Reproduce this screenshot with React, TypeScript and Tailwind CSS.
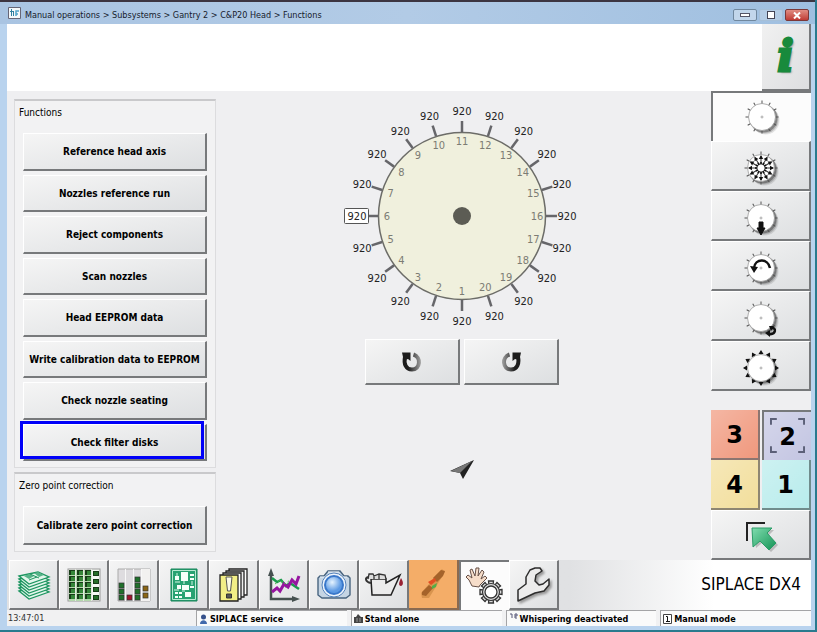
import type { ReactNode } from "react"
import clsx from "clsx"

const functionLabels = [
    "Reference head axis",
    "Nozzles reference run",
    "Reject components",
    "Scan nozzles",
    "Head EEPROM data",
    "Write calibration data to EEPROM",
    "Check nozzle seating",
    "Check filter disks",
]

const bevel =
    "border-t border-l border-r-2 border-b-2 border-t-white border-l-white border-r-[#77797b] border-b-[#77797b] bg-linear-to-br from-[#f5f5f5] via-[#e9eaeb] to-[#dddfe1]"
const sunken = "border-t-2 border-l-2 border-[#77797b] bg-[#fcfcfc]"

function PushButton({ label, highlighted = false }: { label: string; highlighted?: boolean }) {
    return (
        <button
            type="button"
            className={clsx(
                "relative flex-1 min-h-8 pt-0.5 whitespace-nowrap text-center text-[10px] leading-4 font-bold",
                bevel,
            )}
        >
            {label}
            {highlighted && <span className="absolute -top-1 -left-1 right-px bottom-0 border-3 border-[#0000f8]" />}
        </button>
    )
}

function Group({ title, children, className }: { title: string; children: ReactNode; className?: string }) {
    return (
        <section
            className={clsx(
                "flex flex-col border border-t-2 border-[#dcdcde] border-t-[#c9c9cb] bg-[#f2f2f3] pl-2 pr-2 pb-1.5",
                className,
            )}
        >
            <h2 className="-ml-1 h-8 pt-1 text-[10px] leading-4">{title}</h2>
            {children}
        </section>
    )
}

function polar(deg: number, r: number) {
    const a = (deg * Math.PI) / 180
    return { x: Math.cos(a) * r, y: Math.sin(a) * r }
}

// Segment 16 is on the right, numbers grow clockwise up to 20 and 1 is at the bottom
function HeadDial() {
    const segments = Array.from({ length: 20 }, (_, i) => ({ id: i + 1, deg: 90 + i * 18 }))
    return (
        <svg width="240" height="230" viewBox="-120 -115 240 230" className="text-[11px]" role="img" aria-label="Head segments">
            <circle r="83.5" fill="#f0f0dd" stroke="#6c6c68" strokeWidth="1.5" />
            {segments.map(({ id, deg }) => {
                const a = polar(deg, 84)
                const b = polar(deg, 95)
                const outer = polar(deg, 105)
                const inner = polar(deg, 75)
                return (
                    <g key={id} textAnchor="middle">
                        <line x1={a.x} y1={a.y} x2={b.x} y2={b.y} stroke="#66666a" strokeWidth="2.5" />
                        {id === 6 && (
                            <rect x="-117.5" y="-7.5" width="24" height="15" rx="1" fill="#fff" stroke="#555" />
                        )}
                        <text x={outer.x} y={outer.y + 4} fill="#222">920</text>
                        <text x={inner.x} y={inner.y + 4} fill="#7c7c74">{id}</text>
                    </g>
                )
            })}
            <circle r="9" fill="#5c5c54" />
        </svg>
    )
}

function RotateIcon({ mirrored = false }: { mirrored?: boolean }) {
    return (
        <svg width="22" height="22" viewBox="0 0 22 22" className={mirrored ? "-scale-x-100" : ""}>
            <defs>
                <linearGradient id="rotate-fill" gradientUnits="userSpaceOnUse" x1="4" y1="0" x2="20" y2="0">
                    <stop offset="0.2" stopColor="#1c1c1c" />
                    <stop offset="1" stopColor="#a2a2a2" />
                </linearGradient>
            </defs>
            <path d="M4 6C2.500 13 5 18.500 11 18.500C19.500 18.500 20.500 6 12.500 3.500" fill="none" stroke="url(#rotate-fill)" strokeWidth="4" />
            <path d="M1 1.500H9.500V10L7 8L3 9L2 6Z" fill="#1c1c1c" />
        </svg>
    )
}

type HeadVariant = "plain" | "stars" | "down" | "turn" | "corner" | "arrows"

function HeadIcon({ variant }: { variant: HeadVariant }) {
    const spokes = Array.from({ length: 12 }, (_, i) => i * 30)
    return (
        <svg width="44" height="44" viewBox="-22 -22 44 44" className="overflow-visible">
            <circle cx="3.500" cy="3.500" r="14" fill="#000" opacity="0.1" />
            <circle cx="2.500" cy="2.500" r="14" fill="#000" opacity="0.16" />
            <circle cx="1.500" cy="1.500" r="14" fill="#000" opacity="0.3" />
            {spokes.map((d) => (
                <line key={d} x1="13" x2="16.500" stroke="#555" transform={`rotate(${d})`} />
            ))}
            <circle r="13.500" fill="#fff" stroke="#999" strokeWidth="0.8" />
            {variant !== "stars" && <path d="M-1.500 0H1.500M0-1.500V1.500" stroke="#999" strokeWidth="0.8" />}
            {variant === "stars" &&
                spokes.map((d) => (
                    <g key={d} transform={`rotate(${d})`}>
                        <path d="M6 0H12" stroke="#333" strokeWidth="1" />
                        <path d="M13 0L9-2.200V2.200Z" fill="#111" />
                        <path d="M3.500-0.900H6V0.900H3.500Z" fill="#111" />
                    </g>
                ))}
            {variant === "down" && <path d="M-2 4H2V10H4L0 17L-4 10H-2Z" fill="#111" stroke="#111" />}
            {variant === "turn" && (
                <g>
                    <path d="M-7 0C-6-10 7-10 9 0" fill="none" stroke="#111" strokeWidth="2.5" />
                    <path d="M-11-2L-3-1L-7 5Z" fill="#111" />
                </g>
            )}
            {variant === "corner" && (
                <g>
                    <path d="M10 10C16 9 15 17 8 16" fill="none" stroke="#111" strokeWidth="2.5" />
                    <path d="M9 12L4 15L9 19ZM8 8H13L10 13Z" fill="#111" />
                </g>
            )}
            {variant === "arrows" &&
                spokes.map((d) => (
                    <path key={d} d="M18 0L14-2.500V2.500Z" fill="#111" transform={`rotate(${d})`} />
                ))}
        </svg>
    )
}

const headTools: { name: string; variant: HeadVariant }[] = [
    { name: "Head functions", variant: "plain" },
    { name: "Star", variant: "stars" },
    { name: "Z axis", variant: "down" },
    { name: "Turn star", variant: "turn" },
    { name: "DP axis", variant: "corner" },
    { name: "Segments", variant: "arrows" },
]

function LayersIcon() {
    return (
        <svg width="34" height="34" viewBox="0 0 34 34">
            {[25, 22, 19, 16, 13, 10].map((y) => (
                <path
                    key={y}
                    d={`M2 ${y - 2}L21 ${y - 6}L32 ${y - 1}L12 ${y + 6}Z`}
                    fill="#e2f6eb"
                    stroke="#1d9560"
                    strokeWidth="1.3"
                />
            ))}
            <path d="M7 8L12 6L17 8L12 11ZM17 5L21 4L27 7L22 9Z" fill="#56b388" />
            <path d="M12 12L20 9M13 6L22 10" stroke="#1d9560" />
        </svg>
    )
}

function FeederIcon() {
    return (
        <svg width="34" height="34" viewBox="0 0 34 34">
            <rect x="1" y="1" width="32" height="32" fill="#f5f8f3" stroke="#999" />
            <path d="M2 2H24V33H2Z" fill="#b4d8ad" />
            <path d="M8.500 1V33M16.500 1V33M24.500 1V33" stroke="#e3e8e0" />
            {[2, 8, 14, 20, 26].map((y) =>
                [2, 10, 18].map((x) => (
                    <g key={`${x}-${y}`}>
                        <rect x={x} y={y} width="6" height="5" fill="#173c18" />
                        <rect x={x + 2} y={y + 1} width="4" height="4" fill="#348638" />
                    </g>
                )),
            )}
            {[3, 11, 19, 27].map((y) => (
                <g key={y}>
                    <rect x="26" y={y} width="6" height="5" fill="#173c18" />
                    <rect x="27" y={y + 1} width="4" height="3" fill="#266e28" />
                </g>
            ))}
        </svg>
    )
}

function LevelsIcon() {
    const blocks: [number, number, string][] = [
        [2, 15, "#20702b"], [2, 21, "#20702b"], [2, 27, "#20702b"],
        [10, 27, "#a2142d"],
        [18, 9, "#20702b"], [18, 15, "#20702b"], [18, 21, "#20702b"], [18, 27, "#20702b"],
        [26, 18, "#8b6514"], [26, 25, "#8b6514"],
    ]
    return (
        <svg width="34" height="34" viewBox="0 0 34 34">
            <path d="M1 1H33V33H1Z" fill="#dedcdf" stroke="#aaa" />
            <path d="M25 1H33V33H25Z" fill="#f2f1f0" />
            <path d="M8.500 1V33M16.500 1V33M24.500 1V33" stroke="#f8f8f8" />
            {blocks.map(([x, y, fill]) => (
                <rect key={`${x}-${y}`} x={x} y={y} width="5" height="5" fill={fill} stroke="#333" strokeWidth="0.7" />
            ))}
        </svg>
    )
}

function BoardIcon() {
    return (
        <svg width="28" height="34" viewBox="0 0 28 34">
            <path d="M1 1H27V33H1Z" fill="#28a272" stroke="#168358" />
            <path d="M2.500 2.500H25.500V31.500H2.500Z" fill="none" stroke="#b8e9d2" />
            <path
                d="M11 4H18V13H11ZM5 8H9V12H5ZM20 6H24V8H20ZM20 10H24V12H20ZM7 17H11V21H7ZM12 17H19V22H12ZM20 18H24V20H20ZM15 24H21V29H15ZM5 24H8V26H5ZM9 24H12V26H9ZM5 28H8V30H5ZM9 28H12V30H9Z"
                fill="#f6fffa"
            />
            <path d="M7 5V8M5 14H10M14 13V16M22 13V17M12 23H15M4 22H9" stroke="#d2f5e4" />
        </svg>
    )
}

function MessagesIcon() {
    return (
        <svg width="30" height="34" viewBox="0 0 30 34">
            <g stroke="#222" strokeWidth="1.3">
                <path d="M10 1H28V27H10Z" fill="#fff" />
                <path d="M7 3H25V29H7Z" fill="#eee" />
                <path d="M4 5H22V31H4Z" fill="#fff" />
                <path d="M1 7H19V33H1Z" fill="#f2ee86" />
            </g>
            <path d="M7 9H13L11.500 23H8.500Z" fill="#fbfae4" stroke="#555" />
            <path d="M7.500 26H12.500V30H7.500Z" fill="#555" stroke="#333" />
        </svg>
    )
}

function TrendIcon() {
    return (
        <svg width="34" height="36" viewBox="0 0 34 36">
            <path d="M4 6V32H27" fill="none" stroke="#45504f" strokeWidth="2.500" />
            <path d="M4 1L7 9H1ZM33 32L25 29V35Z" fill="#45504f" />
            <path d="M5 11L10 15L14 13L19 19L23 16L32 22" fill="none" stroke="#1a9b4c" strokeWidth="2.500" />
            <path d="M5 25L10 21L13 24L17 17L21 20L25 13L29 17L32 9" fill="none" stroke="#9615a0" strokeWidth="3" />
            <path d="M8 17L13 13L18 17L23 13" fill="none" stroke="#54bd50" strokeDasharray="2 2" />
        </svg>
    )
}

function CameraIcon() {
    return (
        <svg width="36" height="34" viewBox="0 0 36 34">
            <defs>
                <radialGradient id="lens" cx="0.4" cy="0.35">
                    <stop stopColor="#e6f4ff" />
                    <stop offset="1" stopColor="#5c9ae4" />
                </radialGradient>
            </defs>
            <path d="M2 10L4 8H8L12 3H24L28 8H32L34 10V27L30 30H6L2 27Z" fill="#c5d5e4" stroke="#48647f" strokeWidth="1.4" />
            <path d="M4 9H31M12 4H23" stroke="#eef5fc" />
            <circle cx="18" cy="17" r="12" fill="#eef5fc" stroke="#5783ba" />
            <circle cx="18" cy="17" r="9" fill="url(#lens)" stroke="#3a78ca" strokeWidth="2" />
        </svg>
    )
}

function OilCanIcon() {
    return (
        <svg width="40" height="28" viewBox="0 0 40 28">
            <path d="M7 8H22V12L36 4L27 24H8Z" fill="#ececec" stroke="#222" strokeWidth="1.5" />
            <path d="M4 8L5 3H9L10 5L15 3L21 4L22 8M10 4V8M15 3V8" fill="#ddd" stroke="#333" strokeWidth="1.3" />
            <path d="M4 6C1 7 1 11 7 12" fill="none" stroke="#333" strokeWidth="2" />
            <path d="M37 7C35 11 34 15 37 15C40 14 39 10 37 7Z" fill="#9a2233" />
        </svg>
    )
}

function FeederToolIcon() {
    return (
        <svg width="32" height="34" viewBox="0 0 32 34">
            <path d="M5 31L12 31L28 5L25 2L17 10L12 17L4 26Z" fill="#a5671f" opacity="0.35" />
            <path d="M16 11L24 3L28 4L26 9L20 15ZM5 25L12 18L16 21L9 29L5 28Z" fill="#a5632a" />
            <path d="M11 15L18 11L19 14L14 18Z" fill="#e44c22" />
            <path d="M15 19L20 16L19 20L15 22Z" fill="#53ae47" />
        </svg>
    )
}

function HandGearIcon() {
    return (
        <svg width="40" height="38" viewBox="0 0 40 38">
            <path
                d="M7 19L4 13L1 10L3 8L7 11L5 3L7 2L10 9L11 1L14 1L13 9L17 3L19 5L16 12L20 9L22 11L15 18L14 20Z"
                fill="#f6ddc9"
                stroke="#665047"
            />
            {[0, 45, 90, 135, 180, 225, 270, 315].map((d) => (
                <path
                    key={d}
                    d="M-2.500-11L-2-7H2L2.500-11Z"
                    fill="#ddd"
                    stroke="#333"
                    strokeWidth="1.3"
                    transform={`translate(26 25) rotate(${d})`}
                />
            ))}
            <circle cx="26" cy="25" r="8.500" fill="#ddd" stroke="#333" strokeWidth="1.200" />
            <circle cx="26" cy="25" r="6" fill="#fff" stroke="#333" strokeWidth="1.300" />
        </svg>
    )
}

function WrenchIcon() {
    return (
        <svg width="36" height="38" viewBox="-2 -2 36 38" className="drop-shadow-[2px_2px_1px_#999]">
            <path
                d="M0 33V22L8 16V9L12 2L17 0L22 0L24 3L18 7L17 13L21 17L25 16L31 11V17L26 23L17 25Z"
                fill="#ececec"
                stroke="#2d2d2d"
                strokeWidth="1.500"
                strokeLinejoin="round"
            />
        </svg>
    )
}

const screens = [
    { name: "Boards stack", icon: <LayersIcon /> },
    { name: "Feeders", icon: <FeederIcon /> },
    { name: "Levels", icon: <LevelsIcon /> },
    { name: "Board", icon: <BoardIcon /> },
    { name: "Messages", icon: <MessagesIcon /> },
    { name: "Statistics", icon: <TrendIcon /> },
    { name: "Vision", icon: <CameraIcon /> },
    { name: "Maintenance", icon: <OilCanIcon /> },
    { name: "Setup", icon: <FeederToolIcon /> },
    { name: "Manual operations", icon: <HandGearIcon /> },
    { name: "Service", icon: <WrenchIcon /> },
]

const gantries = [
    { id: 3, color: "bg-[#f0987d] border-[#8c7570]" },
    { id: 2, color: "bg-[#c3c5e2] border-[#77797b]" },
    { id: 4, color: "bg-[#f2de9b] border-[#8e8672]" },
    { id: 1, color: "bg-[#b8ecec] border-[#708c8c]" },
]

function TitleBar() {
    return (
        <header className="flex h-6 items-center bg-linear-to-r from-[#a9c4e2] via-[#b2cbe6] to-[#9fbfe0] border-t-2 border-[#3c3541]">
            <svg width="13" height="12" viewBox="0 0 13 12" className="ml-2">
                <path d="M.500 .500H12.500V11.500H.500Z" fill="#f5f8fa" stroke="#667" />
                <path d="M3.500 2V9M5.500 4V9M2 4.500H6" stroke="#2f7fa0" />
                <path d="M8 9V4H11M8 7H10" stroke="#4fa3c8" strokeWidth="1.500" fill="none" />
            </svg>
            <h1 className="ml-1 flex-1 whitespace-nowrap pt-1 text-[9px] leading-4 text-[#16202c]">
                Manual operations &gt; Subsystems &gt; Gantry 2 &gt; C&amp;P20 Head &gt; Functions
            </h1>
            <div className="mt-1 mr-1.5 flex gap-0.5">
                <button type="button" aria-label="Minimize" className="flex h-3 w-6 items-center justify-center rounded-xs border border-[#70889f] bg-[#c2d6eb]">
                    <span className="h-1 w-2.5 border border-[#556] bg-white" />
                </button>
                <button type="button" aria-label="Maximize" className="flex h-3 w-6 items-center justify-center rounded-xs border border-[#a5bfd8] bg-[#b4cce5]">
                    <span className="h-2 w-2 border border-[#445] bg-white" />
                </button>
                <button type="button" aria-label="Close" className="flex h-3 w-6 items-center justify-center rounded-xs border border-[#7c3838] bg-linear-to-b from-[#e08b82] to-[#bf3a35]">
                    <svg width="8" height="7" viewBox="0 0 8 7">
                        <path d="M1 .500L7 6.500M7 .500L1 6.500" stroke="#fff" strokeWidth="2" />
                    </svg>
                </button>
            </div>
        </header>
    )
}

function SideBar() {
    return (
        <aside className="flex w-25 flex-col">
            {headTools.map(({ name, variant }, i) => (
                <button
                    key={name}
                    type="button"
                    aria-label={name}
                    className={clsx("flex h-[50px] items-center justify-center", i === 0 ? sunken : "pt-1", i > 0 && bevel)}
                >
                    <HeadIcon variant={variant} />
                </button>
            ))}
            <div className="mt-auto grid grid-cols-2 gap-x-0.5">
                {gantries.map(({ id, color }) => (
                    <button
                        key={id}
                        type="button"
                        className={clsx(
                            "relative h-[50px] bg-linear-to-br from-white/30 to-transparent pt-0.5 font-['DejaVu_Sans'] text-2xl font-bold",
                            id === 2 ? "border-t-2 border-l-2" : "border-r-2 border-b-2",
                            color,
                        )}
                    >
                        {id}
                        {id === 2 && (
                            <svg viewBox="0 0 36 36" className="absolute inset-1.5" fill="none" stroke="#5c6078" strokeWidth="2">
                                <path d="M1 7V1H7M29 1H35V7M35 29V35H29M7 35H1V29" />
                            </svg>
                        )}
                    </button>
                ))}
            </div>
            <button type="button" aria-label="Back" className={clsx("flex h-[50px] items-center justify-center pt-1", bevel)}>
                <svg width="34" height="34" viewBox="0 0 34 34">
                    <defs>
                        <linearGradient id="back-fill" x2="1" y2="1">
                            <stop stopColor="#7fdcae" />
                            <stop offset="1" stopColor="#149356" />
                        </linearGradient>
                    </defs>
                    <path d="M3 21V3H21" fill="none" stroke="#222" strokeWidth="2" />
                    <path d="M10 10H30L25 15L34 25L27 32L18 23L12 28Z" fill="#777" opacity="0.4" />
                    <path d="M8 8H28L23 13L32 23L25 30L16 21L9 27Z" fill="url(#back-fill)" stroke="#2c9c68" />
                </svg>
            </button>
        </aside>
    )
}

function StatusCell({ icon, children }: { icon: ReactNode; children: ReactNode }) {
    return (
        <div className="flex flex-1 items-center gap-0.5 overflow-hidden whitespace-nowrap border-t border-l border-[#a4a4a6] bg-[#fafafa] pl-0.5 text-[9px] leading-4 font-bold">
            {icon}
            {children}
        </div>
    )
}

function StatusBar() {
    return (
        <footer className="flex h-4 gap-1 bg-[#f1f1f2]">
            <time className="w-[185px] pl-px text-[9px] leading-4 text-[#333]">13:47:01</time>
            <StatusCell
                icon={
                    <svg width="9" height="10" viewBox="0 0 9 10">
                        <circle cx="4.500" cy="3" r="2.500" fill="#36518b" />
                        <path d="M1 10C1 5 8 5 8 10Z" fill="#4169ac" />
                    </svg>
                }
            >
                SIPLACE service
            </StatusCell>
            <StatusCell
                icon={
                    <svg width="9" height="9" viewBox="0 0 9 9">
                        <path d="M0 9V3H2L4 0L7 3H9V9Z" fill="#444" />
                        <path d="M3 4V8M6 4V8" stroke="#999" />
                    </svg>
                }
            >
                Stand alone
            </StatusCell>
            <StatusCell
                icon={
                    <svg width="9" height="12" viewBox="0 0 9 12">
                        <path d="M1 1H3V5M6 1V5M6 1H8V3H6M6 5H8" fill="none" stroke="#557" />
                    </svg>
                }
            >
                Whispering deactivated
            </StatusCell>
            <StatusCell
                icon={
                    <svg width="9" height="10" viewBox="0 0 9 10">
                        <path d="M.500 .500H8.500V9.500H.500Z" fill="#fff" stroke="#444" />
                        <path d="M3 2.500H4.500V7.500M3 7.500H7" fill="none" stroke="#111" />
                    </svg>
                }
            >
                Manual mode
            </StatusCell>
        </footer>
    )
}

export default function App() {
    return (
        <div className="flex min-h-screen flex-col border-r-2 border-b-2 border-[#297a8e] bg-[#b9d3ee] font-['DejaVu_Sans_Condensed','DejaVu_Sans',sans-serif] text-black">
            <TitleBar />
            <div className="mr-1 mb-1 ml-[7px] flex flex-1 flex-col bg-[#efeff1]">
                <div className="flex h-[67px] justify-end bg-white">
                    <button
                        type="button"
                        aria-label="Information"
                        className="w-[49px] border-r-2 border-b-2 border-[#77797b] bg-linear-to-br from-[#f1f1f1] to-[#dddee0] font-['DejaVu_Serif'] text-[42px] leading-none font-bold text-[#188a3c] italic [-webkit-text-stroke:3px_#188a3c] [text-shadow:2px_2px_2px_#999]"
                    >
                        i
                    </button>
                </div>

                <main className="flex flex-1">
                    <div className="flex w-[209px] flex-col gap-1 pt-2 pb-2 pl-[7px]">
                        <Group title="Functions" className="flex-1">
                            <div className="flex flex-1 flex-col gap-1">
                                {functionLabels.map((label) => (
                                    <PushButton key={label} label={label} highlighted={label === "Check filter disks"} />
                                ))}
                            </div>
                        </Group>
                        <Group title="Zero point correction" className="h-20">
                            <PushButton label="Calibrate zero point correction" />
                        </Group>
                    </div>

                    <div className="flex flex-1 flex-col items-center pt-2.5 pr-1">
                        <HeadDial />
                        <div className="mt-2 flex gap-1">
                            <button type="button" aria-label="Rotate counterclockwise" className={clsx("flex h-[46px] w-[95px] items-center justify-center", bevel)}>
                                <RotateIcon />
                            </button>
                            <button type="button" aria-label="Rotate clockwise" className={clsx("flex h-[46px] w-[95px] items-center justify-center", bevel)}>
                                <RotateIcon mirrored />
                            </button>
                        </div>
                        <svg width="24" height="20" viewBox="0 0 24 20" className="mt-[75px]">
                            <path d="M0 11L24 0L13 19L10 13Z" fill="#222" />
                            <path d="M1 11L22 1L10 13Z" fill="#777" />
                        </svg>
                    </div>

                    <SideBar />
                </main>

                <div className="flex h-[50px] items-stretch bg-linear-to-r from-[#e0e1e3] from-70% to-white to-88% pl-0.5">
                    {screens.map(({ name, icon }) => (
                        <button
                            key={name}
                            type="button"
                            aria-label={name}
                            className={clsx(
                                "flex w-[50px] items-center justify-center",
                                name === "Manual operations" && sunken,
                                name === "Setup" && "border-r-2 border-b-2 border-[#8a6a50] bg-[#f4ad68]",
                                name !== "Manual operations" && name !== "Setup" && bevel,
                            )}
                        >
                            {icon}
                        </button>
                    ))}
                    <p className="ml-auto self-center pr-2.5 text-[17px] whitespace-nowrap">SIPLACE DX4</p>
                </div>
                <StatusBar />
            </div>
        </div>
    )
}
